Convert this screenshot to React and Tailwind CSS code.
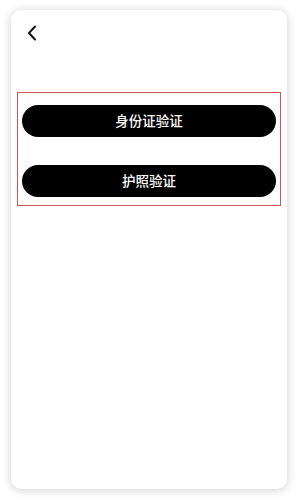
import React from 'react';

const font = { fontFamily: '"Noto Sans CJK SC", "Noto Sans", sans-serif' };

const BackIcon = () => (
  <svg width="10" height="16" viewBox="0 0 10 16" fill="none">
    <path d="M8 1.5L2 8l6 6.5" stroke="#111" strokeWidth="2" strokeLinecap="round" strokeLinejoin="round" />
  </svg>
);

const VerifyButton = ({ label }) => (
  <button
    type="button"
    className="h-[32px] w-full rounded-full bg-black text-white text-[13.5px] font-medium leading-none"
    style={font}
  >
    {label}
  </button>
);

export default function App() {
  return (
    <div className="w-[298px] h-[500px] bg-white pt-[10px] pl-[11px] pr-[11px] pb-[11px]">
      <div className="h-full w-full rounded-[10px] bg-white shadow-[0_1px_10px_rgba(0,0,0,0.2)] flex flex-col">
        {/* Header */}
        <div className="pl-[16px] pt-[15px] h-[82px]">
          <BackIcon />
        </div>

        {/* Options */}
        <div className="mx-[6px] border border-[#d05555] pt-[12px] px-[4px] pb-[8px] flex flex-col gap-[28px]">
          <VerifyButton label="身份证验证" />
          <VerifyButton label="护照验证" />
        </div>
      </div>
    </div>
  );
}
